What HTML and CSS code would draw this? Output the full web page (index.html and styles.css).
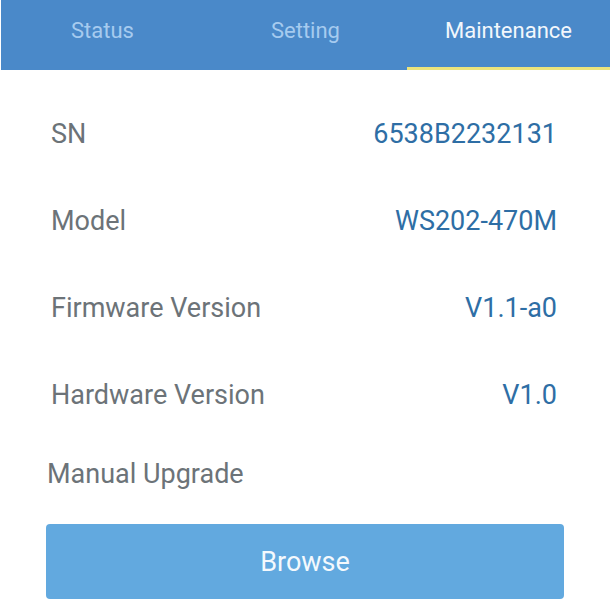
FILE: index.html
```html
<!DOCTYPE html>
<html>
<head>
<meta charset="utf-8">
<link rel="stylesheet" href="styles.css">
</head>
<body>
<div class="tabs">
  <div class="tab">Status</div>
  <div class="tab">Setting</div>
  <div class="tab active">Maintenance</div>
</div>
<div class="content">
  <div class="row"><span class="label">SN</span><span class="value">6538B2232131</span></div>
  <div class="row"><span class="label">Model</span><span class="value">WS202-470M</span></div>
  <div class="row"><span class="label">Firmware Version</span><span class="value">V1.1-a0</span></div>
  <div class="row"><span class="label">Hardware Version</span><span class="value">V1.0</span></div>
  <div class="upgrade">Manual Upgrade</div>
  <button class="browse">Browse</button>
</div>
</body>
</html>
```
FILE: styles.css
```css
html, body {
  margin: 0;
  padding: 0;
  background: #ffffff;
  font-family: Roboto, "Noto Sans", sans-serif;
}
.tabs {
  display: flex;
  height: 70px;
  background: #4a89c9;
  margin-left: 1px;
}
.tab {
  flex: 1;
  box-sizing: border-box;
  text-align: center;
  font-size: 22px;
  line-height: 62px;
  color: #a6cbef;
  border-bottom: 3px solid transparent;
}
.tab.active {
  color: #f2f7fc;
  border-bottom-color: #ece47c;
}
.content {
  padding: 20px 53px 0 51px;
}
.row {
  display: flex;
  justify-content: space-between;
  align-items: center;
  height: 87px;
  font-size: 27px;
}
.label {
  color: #6c7378;
}
.value {
  color: #2e6ea5;
}
.upgrade {
  margin-left: -4px;
  height: 72px;
  line-height: 72px;
  font-size: 27px;
  color: #6c7378;
}
.browse {
  display: block;
  margin: 14px 0 0 -5px;
  width: 518px;
  height: 75px;
  border: none;
  border-radius: 4px;
  background: #62a9df;
  color: #f4f9fd;
  font-family: Roboto, "Noto Sans", sans-serif;
  font-size: 27px;
}
```
